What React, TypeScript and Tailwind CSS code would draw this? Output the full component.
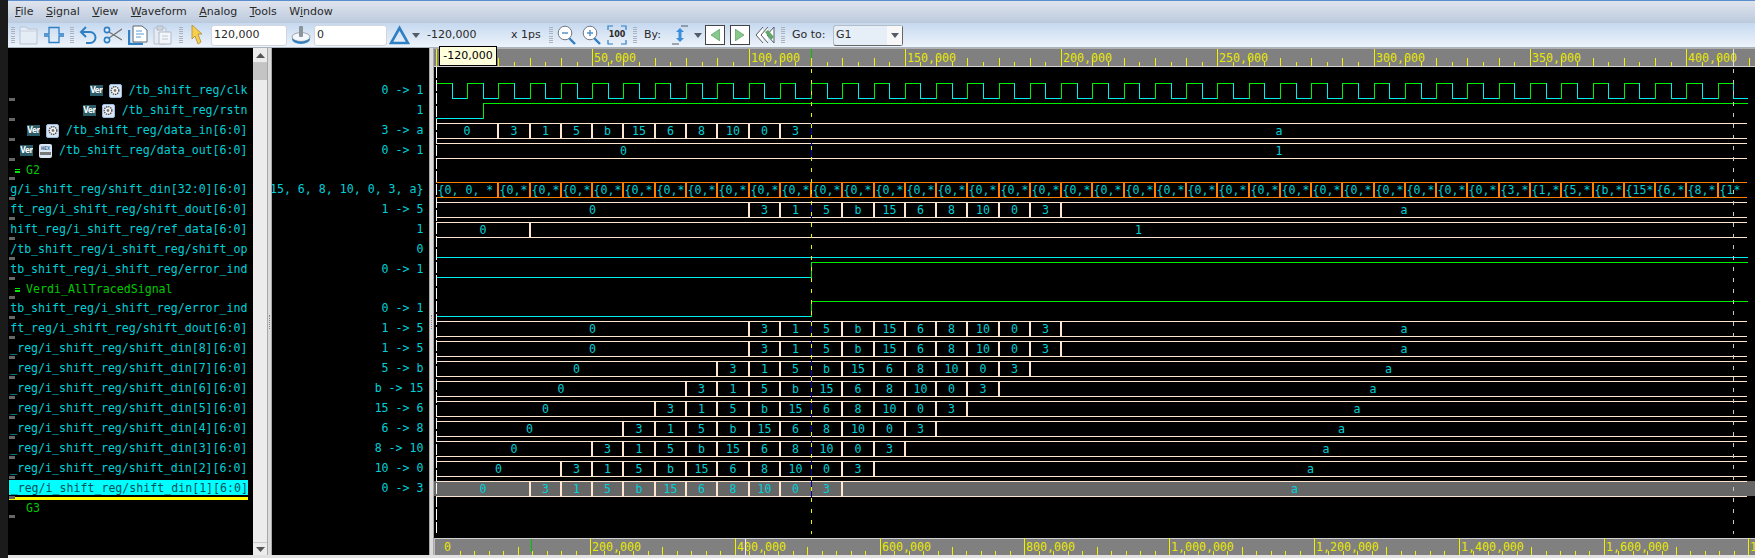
import type { ReactNode } from "react";

const T_END = 419300;
const MONO = "font-['DejaVu_Sans_Mono',monospace]";

type Row = {
  name: string;
  value?: string;
  group?: boolean;
  mark?: boolean;
  icon?: "gear" | "hex";
  selected?: boolean;
};

const rows: Row[] = [
  { name: "/tb_shift_reg/clk", value: "0 -> 1", icon: "gear" },
  { name: "/tb_shift_reg/rstn", value: "1", icon: "gear" },
  { name: "/tb_shift_reg/data_in[6:0]", value: "3 -> a", icon: "gear" },
  { name: "/tb_shift_reg/data_out[6:0]", value: "0 -> 1", icon: "hex" },
  { name: "G2", group: true, mark: true },
  { name: "g/i_shift_reg/shift_din[32:0][6:0]", value: "15, 6, 8, 10, 0, 3, a}" },
  { name: "ft_reg/i_shift_reg/shift_dout[6:0]", value: "1 -> 5" },
  { name: "hift_reg/i_shift_reg/ref_data[6:0]", value: "1" },
  { name: "/tb_shift_reg/i_shift_reg/shift_op", value: "0" },
  { name: "tb_shift_reg/i_shift_reg/error_ind", value: "0 -> 1" },
  { name: "Verdi_AllTracedSignal", group: true, mark: true },
  { name: "tb_shift_reg/i_shift_reg/error_ind", value: "0 -> 1" },
  { name: "ft_reg/i_shift_reg/shift_dout[6:0]", value: "1 -> 5" },
  { name: "_reg/i_shift_reg/shift_din[8][6:0]", value: "1 -> 5" },
  { name: "_reg/i_shift_reg/shift_din[7][6:0]", value: "5 -> b" },
  { name: "_reg/i_shift_reg/shift_din[6][6:0]", value: "b -> 15" },
  { name: "_reg/i_shift_reg/shift_din[5][6:0]", value: "15 -> 6" },
  { name: "_reg/i_shift_reg/shift_din[4][6:0]", value: "6 -> 8" },
  { name: "_reg/i_shift_reg/shift_din[3][6:0]", value: "8 -> 10" },
  { name: "_reg/i_shift_reg/shift_din[2][6:0]", value: "10 -> 0" },
  { name: "_reg/i_shift_reg/shift_din[1][6:0]", value: "0 -> 3", selected: true },
  { name: "G3", group: true },
];

const tx = (t: number) => Math.floor(436.4 + t * 0.003126);

const SEQ = ["3", "1", "5", "b", "15", "6", "8", "10", "0", "3", "a"];

// data moving down the shift register: 0, then SEQ starting at `start`
function shifted(start: number) {
  const segs = [{ t: 0, label: "0" }];
  SEQ.forEach((label, i) => segs.push({ t: start + i * 10000, label }));
  return segs;
}

function din32() {
  const segs = [{ t: 0, label: "{0, 0, *" }];
  for (let t = 20000; t < 340000; t += 10000) segs.push({ t, label: "{0,*" });
  ["{3,*", "{1,*", "{5,*", "{b,*", "{15*", "{6,*", "{8,*", "{1*"].forEach((label, i) =>
    segs.push({ t: 340000 + i * 10000, label })
  );
  return segs;
}

function Bus({
  top,
  segs,
  orange,
  selected,
}: {
  top: number;
  segs: { t: number; label: string }[];
  orange?: boolean;
  selected?: boolean;
}) {
  const color = orange ? "#ff8000" : "#ffe6d0";
  const y1 = top + 3;
  const y2 = top + 18;
  const end = tx(T_END);
  return (
    <g>
      {selected && <rect x={434} y={y1} width={1321} height={15} fill="#666666" />}
      <rect x={436} y={y1} width={end - 436} height={1} fill={color} />
      <rect x={436} y={y2} width={end - 436} height={1} fill={color} />
      {segs.map((s, i) => {
        const x = tx(s.t);
        const next = i + 1 < segs.length ? tx(segs[i + 1].t) : end;
        const atCursor = s.t === 120000 && !orange;
        return (
          <g key={i}>
            {i > 0 && (
              <rect
                x={x - (atCursor ? 0 : 1)}
                y={y1}
                width={atCursor ? 1 : 2}
                height={16}
                fill={atCursor ? "#0000b0" : color}
              />
            )}
            <text
              x={orange ? x + 1.5 : (x + next) / 2}
              y={y1 + 11.5}
              textAnchor={orange ? "start" : "middle"}
              fill="#00d0d8"
              fontSize={11.6}
              className={MONO}
            >
              {s.label}
            </text>
          </g>
        );
      })}
    </g>
  );
}

// one bit signal: list of times where it toggles, low in cyan, high in green
function Bit({ top, start, edges }: { top: number; start: 0 | 1; edges: number[] }) {
  const hi = top + 3;
  const lo = top + 18;
  const points = [0, ...edges, T_END];
  const parts: ReactNode[] = [];
  let level = start;
  for (let i = 0; i + 1 < points.length; i++) {
    const a = tx(points[i]);
    const b = tx(points[i + 1]);
    const c = level ? "#00ee00" : "#00eeee";
    parts.push(<rect key={"h" + i} x={a} y={level ? hi : lo} width={b - a + 1} height={1} fill={c} />);
    if (i + 2 < points.length) {
      parts.push(
        <rect key={"v" + i} x={b} y={hi} width={1} height={16} fill={level ? "#00eeee" : "#00ee00"} />
      );
    }
    level = level ? 0 : 1;
  }
  return <g>{parts}</g>;
}

function Waves() {
  const clock: number[] = [];
  for (let t = 5000; t < T_END; t += 5000) clock.push(t);
  return (
    <svg viewBox="434 67 1321 471" width={1321} height={471} className="block bg-black">
      <Bit top={80} start={1} edges={clock} />
      <Bit top={100} start={0} edges={[15000]} />
      <Bus top={120} segs={shifted(20000)} />
      <Bus top={140} segs={[{ t: 0, label: "0" }, { t: 120000, label: "1" }]} />
      <Bus top={179} segs={din32()} orange />
      <Bus top={199} segs={shifted(100000)} />
      <Bus top={219} segs={[{ t: 0, label: "0" }, { t: 30000, label: "1" }]} />
      <Bit top={239} start={0} edges={[]} />
      <Bit top={259} start={0} edges={[120000]} />
      <Bit top={298} start={0} edges={[120000]} />
      <Bus top={318} segs={shifted(100000)} />
      <Bus top={338} segs={shifted(100000)} />
      <Bus top={358} segs={shifted(90000)} />
      <Bus top={378} segs={shifted(80000)} />
      <Bus top={398} segs={shifted(70000)} />
      <Bus top={418} segs={shifted(60000)} />
      <Bus top={438} segs={shifted(50000)} />
      <Bus top={458} segs={shifted(40000)} />
      <Bus top={478} segs={shifted(30000)} selected />
      <line x1={436.5} y1={67} x2={436.5} y2={534} stroke="#ffffff" strokeDasharray="11 2" />
      <line x1={811.5} y1={69} x2={811.5} y2={534} stroke="#f0f000" strokeDasharray="4 7" />
      <line x1={1733.5} y1={69} x2={1733.5} y2={534} stroke="#c8c8c8" strokeDasharray="4 7" />
    </svg>
  );
}

function TopRuler() {
  const ticks: ReactNode[] = [];
  for (let t = 0; t <= 420000; t += 5000) {
    const x = tx(t);
    const major = t % 50000 === 0;
    const long = t % 10000 === 0;
    const h = major ? 17 : long ? 8 : 4;
    ticks.push(<rect key={t} x={x} y={66 - h} width={1} height={h} fill="#f0f000" />);
    if (major && t > 0) {
      ticks.push(
        <text key={"l" + t} x={x + 2} y={62} fill="#e8e800" fontSize={11.6} className={MONO}>
          {t.toLocaleString("en-US")}
        </text>
      );
    }
  }
  return (
    <svg viewBox="434 48 1321 19" width={1321} height={19} className="block bg-[#808080]">
      <rect x={434} y={48} width={1321} height={1} fill="#b0b0b0" />
      {ticks}
      <rect x={434} y={66} width={1321} height={1} fill="#d0d0d0" />
      <rect x={811} y={49} width={1} height={9} fill="#00c000" />
      <rect x={1733} y={49} width={1} height={17} fill="#e0e0e0" />
    </svg>
  );
}

function BottomRuler() {
  const bx = (t: number) => Math.round(445.2 + t * 0.000724);
  const ticks: ReactNode[] = [];
  for (let t = 20000; t <= 1820000; t += 20000) {
    const x = bx(t);
    const major = t % 200000 === 0;
    const long = t % 100000 === 0;
    const h = major ? 17 : long ? 8 : 4;
    ticks.push(<rect key={t} x={x} y={555 - h} width={1} height={h} fill="#f0f000" />);
    if (major) {
      ticks.push(
        <text key={"l" + t} x={x + 2} y={551} fill="#e8e800" fontSize={11.6} className={MONO}>
          {t.toLocaleString("en-US")}
        </text>
      );
    }
  }
  return (
    <svg viewBox="434 538 1321 17" width={1321} height={17} className="block bg-[#808080]">
      <rect x={434} y={538} width={1321} height={1} fill="#d0d0d0" />
      <rect x={434} y={538} width={1} height={17} fill="#c0c0c0" />
      <text x={444} y={551} fill="#e8e800" fontSize={11.6} className={MONO}>
        0
      </text>
      {ticks}
      <rect x={531} y={539} width={1} height={13} fill="#00c000" />
      <rect x={745} y={539} width={1} height={16} fill="#f0f0f0" />
    </svg>
  );
}

function SignalIcons({ kind }: { kind: "gear" | "hex" }) {
  return (
    <>
      <span className="flex h-[11px] w-[13px] items-center justify-center overflow-hidden bg-[#2c5c68] font-['DejaVu_Sans_Condensed','DejaVu_Sans',sans-serif] text-[8px] font-bold leading-none tracking-tighter text-white">
        Ver
      </span>
      {kind === "gear" ? (
        <span className="ml-[6px] flex h-[14px] w-[13px] items-center justify-center rounded-[2px] border border-[#9dbbdc] bg-[#d5e4f6]">
          <svg viewBox="0 0 10 10" width={10} height={11}>
            <circle cx={5} cy={5} r={3.8} fill="#f4f4f4" stroke="#444" strokeWidth={1.3} strokeDasharray="1.4 0.8" />
            <circle cx={5} cy={5} r={1.4} fill="#777" />
          </svg>
        </span>
      ) : (
        <span className="ml-[6px] flex h-[14px] w-[13px] flex-col items-center justify-center gap-[1px] rounded-[2px] bg-[#dbe6f4]">
          <span className="text-[5px] font-bold leading-none text-[#3a6a90]">HEX</span>
          <span className="h-[3px] w-[11px] bg-[#777]" />
        </span>
      )}
    </>
  );
}

function NamePane() {
  return (
    <div className={`relative flex h-full w-[245px] flex-col bg-black pt-[32px] text-[11.6px] text-[#00d0d8] ${MONO}`}>
      {rows.map((r, i) => (
        <div key={i} className={`relative flex w-full shrink-0 items-center ${r.group ? "h-[19px]" : "h-[20px]"}`}>
          {r.group ? (
            <div className="flex items-center pl-[7px] pt-[2px] text-[#00c800]">
              <span className={`flex w-[5px] flex-col gap-[1px] ${r.mark ? "" : "invisible"}`}>
                <span className="h-[1.5px] bg-[#00e800]" />
                <span className="h-[1.5px] bg-[#00e800]" />
              </span>
              <span className="ml-[6px]">{r.name}</span>
            </div>
          ) : r.selected ? (
            <div className="mt-[-1px] ml-[1px] mr-[5px] flex h-[15px] w-full items-center justify-end overflow-hidden whitespace-pre bg-[#00ffff] pt-[2px] text-[#005058]">
              {r.name}
            </div>
          ) : (
            <div className="flex w-full items-center justify-end overflow-hidden whitespace-pre pr-[5.5px] pt-[2px]">
              {r.icon && <SignalIcons kind={r.icon} />}
              <span className={r.icon ? "ml-[7px]" : ""}>{r.name}</span>
            </div>
          )}
          {r.selected && <div className="absolute bottom-[-2px] left-[1px] h-[3px] w-[239px] bg-[#ffff00]" />}
          <div className="absolute bottom-[-1px] left-[1px] h-[3px] w-[6px] bg-[#666666]" />
        </div>
      ))}
    </div>
  );
}

function ValuePane() {
  return (
    <div className={`flex h-full w-[157px] flex-col overflow-hidden bg-black pt-[32px] text-[11.6px] text-[#00d0d8] ${MONO}`}>
      {rows.map((r, i) => (
        <div
          key={i}
          className={`flex w-full shrink-0 items-center justify-end whitespace-pre pr-[5.5px] pt-[2px] ${r.group ? "h-[19px]" : "h-[20px]"}`}
        >
          {r.value}
        </div>
      ))}
    </div>
  );
}

function Scrollbar() {
  return (
    <div className="flex h-full w-[14px] flex-col bg-[#ececec]">
      <div className="flex h-[15px] items-center justify-center border-b border-[#c8c8c8]">
        <svg width={9} height={5}>
          <path d="M4.5 0L9 5H0z" fill="#555" />
        </svg>
      </div>
      <div className="h-[17px] bg-[#c4c4c4]" />
      <div className="flex-1" />
      <div className="flex h-[13px] items-center justify-center border-t border-[#c8c8c8]">
        <svg width={9} height={5}>
          <path d="M0 0h9L4.5 5z" fill="#555" />
        </svg>
      </div>
    </div>
  );
}

function Splitter({ width }: { width: string }) {
  return (
    <div className={`flex h-full items-center justify-center border-x border-[#a8a8a8] bg-[#dcdcdc] ${width}`}>
      <div className="mt-[40px] h-[14px] border-l border-dotted border-[#888]" />
    </div>
  );
}

function Grip({ className }: { className: string }) {
  return (
    <div className={`flex h-[16px] w-[4px] shrink-0 flex-col justify-between ${className}`}>
      {[0, 1, 2, 3, 4, 5, 6, 7].map((i) => (
        <span key={i} className="h-px w-full bg-[#a9b2bd]" />
      ))}
    </div>
  );
}

function Icon({ w, ml, children }: { w: number; ml: string; children: ReactNode }) {
  return (
    <svg width={w} height={20} viewBox={`0 0 ${w} 20`} className={`shrink-0 ${ml}`}>
      {children}
    </svg>
  );
}

function ZoomIcon({ ml, plus }: { ml: string; plus?: boolean }) {
  return (
    <Icon w={20} ml={ml}>
      <path d="M12 13l6 6" stroke="#2f7fc4" strokeWidth={2.4} />
      <circle cx={8} cy={8} r={6.8} fill="#ffffff" stroke="#6f7780" strokeWidth={1} />
      <path d="M5 8h6" stroke="#4a8ac4" strokeWidth={1.4} />
      {plus && <path d="M8 5v6" stroke="#4a8ac4" strokeWidth={1.4} />}
    </Icon>
  );
}

function Toolbar() {
  return (
    <div className="flex h-[25px] items-center border-b border-[#aab2bc] bg-linear-to-b from-[#c6d9f0] to-[#edf3fa] font-['DejaVu_Sans',sans-serif] text-[11px] text-[#2a2a2a]">
      <Grip className="ml-[3px]" />
      <Icon w={19} ml="ml-[4px]">
        <path d="M1 2h6l2 2h9v15H1z" fill="#e4ecf6" stroke="#b8c4d2" />
        <path d="M1 6h17" stroke="#c6d0dc" />
      </Icon>
      <Icon w={20} ml="ml-[6px]">
        <path d="M0 9h5V2.5h10V9h5M0 11h5v6.5h10V11h5" fill="none" stroke="#2f7fc4" strokeWidth={1.3} />
      </Icon>
      <Grip className="ml-[6px]" />
      <Icon w={20} ml="ml-[4px]">
        <path d="M3 7h9a5 5 0 0 1 0 11H8" fill="none" stroke="#2f7fc4" strokeWidth={2} />
        <path d="M8 2L3 7l5 5" fill="none" stroke="#2f7fc4" strokeWidth={2} />
      </Icon>
      <Icon w={19} ml="ml-[5px]">
        <path d="M6 7L19 15M6 13L19 4" stroke="#707070" strokeWidth={1.2} />
        <circle cx={4} cy={5} r={2.6} fill="#e8f0f8" stroke="#2f7fc4" strokeWidth={1.6} />
        <circle cx={4} cy={15} r={2.6} fill="#e8f0f8" stroke="#2f7fc4" strokeWidth={1.6} />
      </Icon>
      <Icon w={20} ml="ml-[6px]">
        <path d="M1 5v14h14" fill="none" stroke="#2f7fc4" strokeWidth={2.4} />
        <path d="M5 1h9l5 4v12H5z" fill="#ffffff" stroke="#5a6470" />
        <path d="M8 6h6M8 9h8M8 12h5" stroke="#5a9ad0" />
      </Icon>
      <Icon w={19} ml="ml-[5px]">
        <path d="M1 3h12v16H1z" fill="#e4ebf3" stroke="#b8c2ce" />
        <path d="M4 1h6v4H4z" fill="#ccd5df" stroke="#b0bac6" />
        <path d="M6 7h12v12H6z" fill="#f2f5f9" stroke="#b0bac6" />
        <path d="M9 11h6M9 14h6" stroke="#c0c8d2" />
      </Icon>
      <Grip className="ml-[7px]" />
      <Icon w={12} ml="ml-[8px]">
        <path d="M1 0l10 9H7l3 8-3 2-3-8-3 3z" fill="#f6cf4e" stroke="#b08a30" strokeWidth={0.8} />
      </Icon>
      <div className="ml-[8px] flex h-[21px] w-[76px] shrink-0 items-center rounded-[3px] border border-[#cfd6de] bg-white pl-[2px]">
        120,000
      </div>
      <Icon w={21} ml="ml-[4px]">
        <ellipse cx={10} cy={14} rx={9} ry={5} fill="#2f7fc4" />
        <ellipse cx={10} cy={12} rx={9} ry={4.4} fill="#f4f7fb" stroke="#6f7780" strokeWidth={0.6} />
        <rect x={8} y={1} width={4} height={11} rx={1} fill="#8c949c" />
      </Icon>
      <div className="ml-[2px] flex h-[21px] w-[73px] shrink-0 items-center rounded-[3px] border border-[#cfd6de] bg-white pl-[2px]">
        0
      </div>
      <Icon w={21} ml="ml-[2px]">
        <path d="M10.5 3L19 18H2z" fill="none" stroke="#2f7fc4" strokeWidth={2.6} />
      </Icon>
      <svg width={8} height={5} className="ml-[2px] shrink-0">
        <path d="M0 0h8L4 5z" fill="#555c66" />
      </svg>
      <span className="ml-[7px] w-[50px] shrink-0 whitespace-nowrap">-120,000</span>
      <span className="ml-[34px] w-[30px] shrink-0 whitespace-nowrap">x 1ps</span>
      <Grip className="ml-[8px]" />
      <ZoomIcon ml="ml-[4px]" />
      <ZoomIcon ml="ml-[5px]" plus />
      <div className="relative ml-[5px] flex h-[20px] w-[20px] shrink-0 items-center justify-center text-[8px] font-bold">
        <svg width={20} height={20} className="absolute inset-0">
          <path d="M1 5V1h5M14 1h5v4M19 15v4h-5M6 19H1v-4" fill="none" stroke="#2f7fc4" strokeWidth={1.2} />
        </svg>
        100
      </div>
      <Grip className="ml-[6px]" />
      <span className="ml-[7px] w-[16px] shrink-0">By:</span>
      <Icon w={16} ml="ml-[12px]">
        <path d="M8 3l4 4H9.5v6H12l-4 4-4-4h2.5V7H4z" fill="#3c8ed8" />
        <path d="M9 1h7M0 19h7" stroke="#555c66" strokeWidth={1.2} />
      </Icon>
      <svg width={8} height={5} className="ml-[6px] shrink-0">
        <path d="M0 0h8L4 5z" fill="#555c66" />
      </svg>
      <div className="ml-[3px] flex h-[20px] w-[20px] shrink-0 items-center justify-center border border-[#444] bg-white">
        <svg width={10} height={12}>
          <path d="M10 0v12L1 6z" fill="#86c98a" stroke="#5a9a60" strokeWidth={0.7} />
        </svg>
      </div>
      <div className="ml-[5px] flex h-[20px] w-[20px] shrink-0 items-center justify-center border border-[#444] bg-white">
        <svg width={10} height={12}>
          <path d="M0 0v12l9-6z" fill="#86c98a" stroke="#5a9a60" strokeWidth={0.7} />
        </svg>
      </div>
      <Icon w={20} ml="ml-[5px]">
        <path d="M8 2L1 10l7 8M13 2L6 10l7 8" fill="#ffffff" stroke="#555c66" />
        <path d="M19 2L12 10l7 8z" fill="#ffffff" stroke="#555c66" />
        <path d="M10 7l3-2 6 7-3 3z" fill="#63a86a" />
      </Icon>
      <Grip className="ml-[6px]" />
      <span className="ml-[7px] w-[33px] shrink-0 whitespace-nowrap">Go to:</span>
      <div className="ml-[8px] flex h-[21px] w-[70px] shrink-0 items-center justify-between rounded-[3px] border border-[#b4bcc6] border-b-[#666] border-r-[#666] bg-[#e6eef8] pl-[2px]">
        G1
        <div className="flex h-full w-[15px] items-center justify-center bg-[#f8f8f8]">
          <svg width={8} height={5}>
            <path d="M0 0h8L4 5z" fill="#555c66" />
          </svg>
        </div>
      </div>
    </div>
  );
}

const menu: [string, string, string][] = [
  ["", "F", "ile"],
  ["", "S", "ignal"],
  ["", "V", "iew"],
  ["", "W", "aveform"],
  ["", "A", "nalog"],
  ["", "T", "ools"],
  ["W", "i", "ndow"],
];

export default function App() {
  return (
    <div className="relative flex h-[558px] w-[1755px] overflow-hidden bg-black">
      <div className="h-full w-[8px] shrink-0 bg-[#1b1b1b]" />
      <div className="flex h-full w-[1747px] flex-col">
        <div className="flex h-[23px] items-center gap-[12.5px] border-t border-[#5b8fd0] bg-linear-to-b from-[#dfe4ee] to-[#bccadd] pl-[7px] font-['DejaVu_Sans',sans-serif] text-[11px] text-[#2a2a2a]">
          {menu.map(([a, u, b]) => (
            <span key={u + b} className="whitespace-pre">
              {a}
              <span className="underline">{u}</span>
              {b}
            </span>
          ))}
        </div>
        <Toolbar />
        <div className="flex h-[507px] items-stretch">
          <NamePane />
          <Scrollbar />
          <Splitter width="w-[5px]" />
          <ValuePane />
          <Splitter width="w-[5px]" />
          <div className="flex flex-col">
            <TopRuler />
            <Waves />
            <BottomRuler />
          </div>
        </div>
        <div className="h-[3px] bg-[#e2e2e2]" />
      </div>
      <div className="absolute left-[439px] top-[46px] flex h-[20px] w-[58px] items-center justify-center border border-black bg-[#ffffdc] font-['DejaVu_Sans',sans-serif] text-[11px] text-black">
        -120,000
      </div>
    </div>
  );
}
